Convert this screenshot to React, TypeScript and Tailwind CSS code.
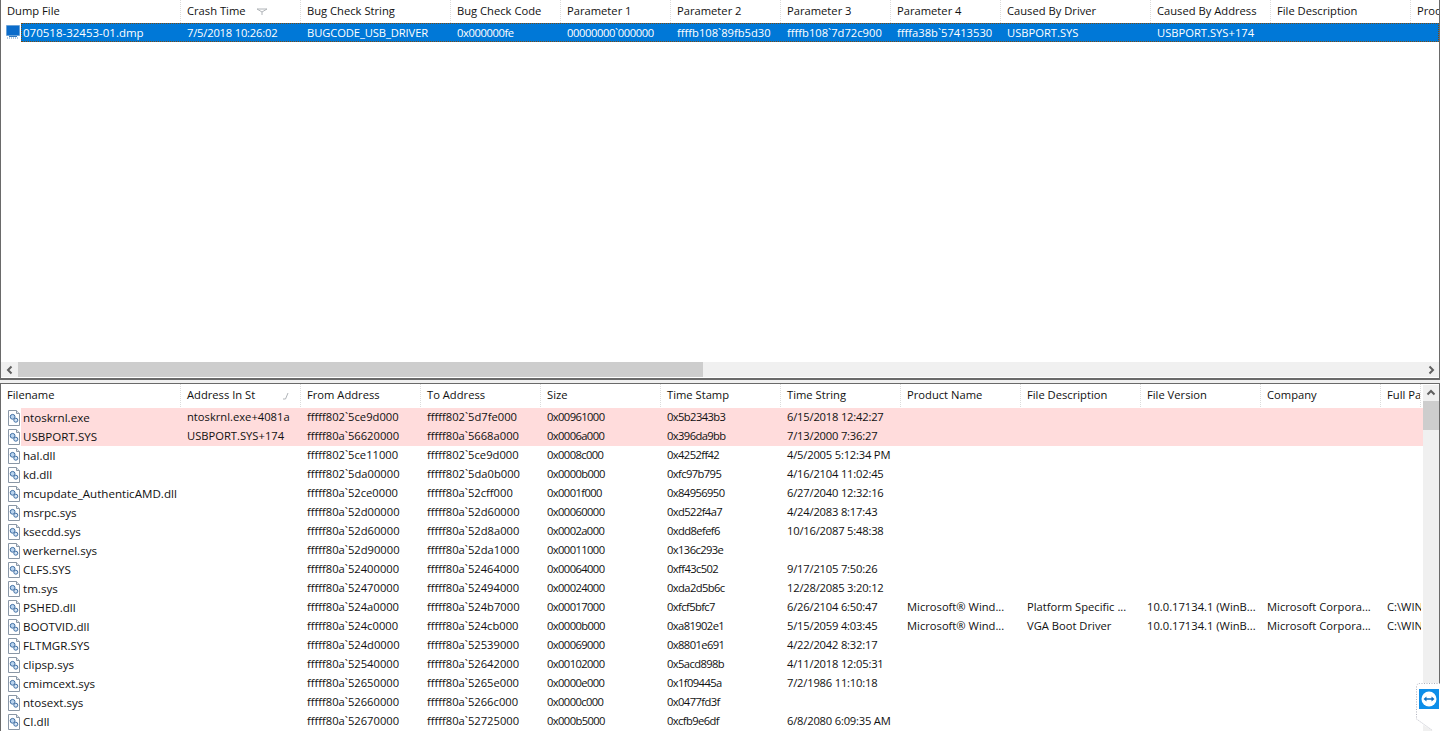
const topCols: [string, number][] = [["Dump File",180],["Crash Time",120],["Bug Check String",150],["Bug Check Code",110],["Parameter 1",110],["Parameter 2",110],["Parameter 3",110],["Parameter 4",110],["Caused By Driver",150],["Caused By Address",120],["File Description",140],["Product Name",120]];
const topRow = ["070518-32453-01.dmp","7/5/2018 10:26:02","BUGCODE_USB_DRIVER","0x000000fe","00000000`000000","ffffb108`89fb5d30","ffffb108`7d72c900","ffffa38b`57413530","USBPORT.SYS","USBPORT.SYS+174","",""];
const topCellClass = ["pl-[2px] text-[11.5px]","pl-[6px] tracking-[-0.2px]","pl-[6px] tracking-[-0.1px]","pl-[6px] tracking-[-0.4px]","pl-[6px] tracking-[-0.4px]","pl-[6px]","pl-[6px]","pl-[6px]","pl-[6px]","pl-[6px]","pl-[6px]","pl-[6px]"];
const botCols: [string, number][] = [["Filename",180],["Address In St",120],["From Address",120],["To Address",120],["Size",120],["Time Stamp",120],["Time String",120],["Product Name",120],["File Description",120],["File Version",120],["Company",120],["Full Path",40]];
const botCellClass = ["pl-[2px] text-[11.6px]","pl-[6px]","pl-[6px]","pl-[6px]","pl-[6px] tracking-[-0.6px]","pl-[6px] tracking-[-0.6px]","pl-[6px] tracking-[-0.2px]","pl-[6px]","pl-[6px]","pl-[6px]","pl-[6px]","pl-[6px]"];
const rows: string[][] = [
["ntoskrnl.exe","ntoskrnl.exe+4081a","fffff802`5ce9d000","fffff802`5d7fe000","0x00961000","0x5b2343b3","6/15/2018 12:42:27"],
["USBPORT.SYS","USBPORT.SYS+174","fffff80a`56620000","fffff80a`5668a000","0x0006a000","0x396da9bb","7/13/2000 7:36:27"],
["hal.dll","","fffff802`5ce11000","fffff802`5ce9d000","0x0008c000","0x4252ff42","4/5/2005 5:12:34 PM"],
["kd.dll","","fffff802`5da00000","fffff802`5da0b000","0x0000b000","0xfc97b795","4/16/2104 11:02:45"],
["mcupdate_AuthenticAMD.dll","","fffff80a`52ce0000","fffff80a`52cff000","0x0001f000","0x84956950","6/27/2040 12:32:16"],
["msrpc.sys","","fffff80a`52d00000","fffff80a`52d60000","0x00060000","0xd522f4a7","4/24/2083 8:17:43"],
["ksecdd.sys","","fffff80a`52d60000","fffff80a`52d8a000","0x0002a000","0xdd8efef6","10/16/2087 5:48:38"],
["werkernel.sys","","fffff80a`52d90000","fffff80a`52da1000","0x00011000","0x136c293e",""],
["CLFS.SYS","","fffff80a`52400000","fffff80a`52464000","0x00064000","0xff43c502","9/17/2105 7:50:26"],
["tm.sys","","fffff80a`52470000","fffff80a`52494000","0x00024000","0xda2d5b6c","12/28/2085 3:20:12"],
["PSHED.dll","","fffff80a`524a0000","fffff80a`524b7000","0x00017000","0xfcf5bfc7","6/26/2104 6:50:47","Microsoft® Wind...","Platform Specific ...","10.0.17134.1 (WinB...","Microsoft Corpora...","C:\\WIN"],
["BOOTVID.dll","","fffff80a`524c0000","fffff80a`524cb000","0x0000b000","0xa81902e1","5/15/2059 4:03:45","Microsoft® Wind...","VGA Boot Driver","10.0.17134.1 (WinB...","Microsoft Corpora...","C:\\WIN"],
["FLTMGR.SYS","","fffff80a`524d0000","fffff80a`52539000","0x00069000","0x8801e691","4/22/2042 8:32:17"],
["clipsp.sys","","fffff80a`52540000","fffff80a`52642000","0x00102000","0x5acd898b","4/11/2018 12:05:31"],
["cmimcext.sys","","fffff80a`52650000","fffff80a`5265e000","0x0000e000","0x1f09445a","7/2/1986 11:10:18"],
["ntosext.sys","","fffff80a`52660000","fffff80a`5266c000","0x0000c000","0x0477fd3f",""],
["CI.dll","","fffff80a`52670000","fffff80a`52725000","0x000b5000","0xcfb9e6df","6/8/2080 6:09:35 AM"],
];
const FONT = "font-['Open_Sans','Noto_Sans',sans-serif] text-[11.2px] text-[#111]";

function DumpIcon() {
  return <svg width="15" height="15" viewBox="0 0 15 15" className="shrink-0"><rect x="0.5" y="0.5" width="13" height="10" fill="#0b6ccb"/><rect x="0.5" y="0.5" width="13" height="10" fill="none" stroke="#4f8fca" strokeDasharray="1 1"/><rect x="3" y="11" width="8" height="1" fill="#2f78c0"/><path d="M1 13h12" stroke="#5d8fc0" strokeDasharray="1 1"/></svg>;
}
function FileIcon() {
  return <svg width="14" height="16" viewBox="0 0 14 16" className="shrink-0"><path d="M1.5.5h8l3 3v12h-11z" fill="#fff" stroke="#8a97a6"/><path d="M9.5.5v3h3" fill="#dfe6ee" stroke="#8a97a6"/><circle cx="5.6" cy="6.8" r="2.4" fill="#b9d3ee" stroke="#3f6ea3"/><circle cx="8.8" cy="10.2" r="2" fill="#d5e4f4" stroke="#3f6ea3"/></svg>;
}
function Header({ cols, sort, tall }: { cols: [string, number][]; sort: "filter" | "arrow"; tall?: boolean }) {
  return (
    <div className={`flex shrink-0 bg-white overflow-hidden ${tall ? "h-[24px] pb-[1px]" : "h-[23px]"}`}>
      {cols.map(([c, w], i) => (
        <div key={c} style={{ width: w }} className="shrink-0 flex items-center pl-[6px] pr-[6px] border-r border-dotted border-[#dcdcdc] overflow-hidden whitespace-nowrap">
          <span>{c}</span>
          {i === 1 && sort === "filter" && <svg width="12" height="8" viewBox="0 0 12 8" className="ml-auto mr-[26px]"><path d="M1 1h10M1 1l5 3v3M6 4l5-3" fill="none" stroke="#b0b4b8"/></svg>}
          {i === 1 && sort === "arrow" && <svg width="7" height="8" viewBox="0 0 7 8" className="ml-auto mr-[5px]"><path d="M1 7h2.5L6 1" fill="none" stroke="#b0b4b8"/></svg>}
        </div>
      ))}
    </div>
  );
}
function Chevron({ d }: { d: string }) {
  return <svg width="10" height="10" viewBox="0 0 10 10"><path d={d} fill="none" stroke="#606060" strokeWidth="2"/></svg>;
}
export default function App() {
  return (
    <div className={`w-[1440px] h-[731px] overflow-hidden bg-white relative flex flex-col ${FONT}`}>
      <div className="h-[380px] shrink-0 flex flex-col border-l border-r border-[#6a6a6a] border-b-2">
        <Header cols={topCols} sort="filter" />
        <div className="flex h-[19px] shrink-0 items-center">
          <div className="w-[20px] pl-[5px] shrink-0"><DumpIcon /></div>
          <div className="flex-1 flex h-full bg-[#0078d7] text-white outline-1 outline-dotted outline-offset-[-1px] outline-[#7a4a10] overflow-hidden whitespace-nowrap">
            {topRow.map((v, i) => (
              <div key={i} style={{ width: i === 0 ? 160 : topCols[i][1] }} className={`shrink-0 flex items-center pt-[1px] ${topCellClass[i]}`}>{v}</div>
            ))}
          </div>
        </div>
        <div className="flex-1" />
        <div className="h-[15px] mb-[1px] shrink-0 flex bg-[#f0f0f0] items-center">
          <div className="w-[17px] flex justify-center"><Chevron d="M6.5 1.5 3 5l3.5 3.5" /></div>
          <div className="w-[685px] h-full bg-[#cdcdcd]" />
          <div className="flex-1" />
          <div className="w-[17px] flex justify-center"><Chevron d="M3.5 1.5 7 5 3.5 8.5" /></div>
        </div>
      </div>
      <div className="h-[3px] shrink-0 bg-[#f0f0f0]" />
      <div className="flex-1 min-h-0 flex border-l border-r border-t border-[#6a6a6a]">
        <div className="flex-1 min-w-0 flex flex-col overflow-hidden">
          <Header cols={botCols} sort="arrow" tall />
          {rows.map((r, ri) => (
            <div key={ri} className="flex h-[19px] shrink-0 items-center whitespace-nowrap">
              <div className="w-[20px] pl-[6px] shrink-0"><FileIcon /></div>
              <div className={`flex-1 flex h-full overflow-hidden ${ri < 2 ? "bg-[#ffdcdc]" : ""}`}>
                {botCols.map(([, w], i) => (
                  <div key={i} style={{ width: i === 0 ? 160 : w }} className={`shrink-0 flex items-center overflow-hidden ${botCellClass[i]}`}>{r[i] ?? ""}</div>
                ))}
              </div>
            </div>
          ))}
        </div>
        <div className="w-[16px] shrink-0 flex flex-col">
          <div className="h-[1px] shrink-0" />
          <div className="flex-1 bg-[#f0f0f0] flex flex-col items-center">
            <div className="h-[16px] flex items-center"><Chevron d="M1.5 6.5 5 3l3.5 3.5" /></div>
            <div className="w-full h-[29px] bg-[#cdcdcd]" />
          </div>
        </div>
      </div>
      <div className="absolute left-[1416px] top-[683px] w-[24px] h-[48px] bg-white [clip-path:polygon(0_0,100%_0,100%_100%,70%_100%,0_78%)] flex items-start pt-[6px] pl-[3px]">
        <div className="w-[20px] h-[20px] bg-[#0e8ee9] flex items-center justify-center shrink-0">
          <svg width="16" height="16" viewBox="0 0 16 16"><circle cx="8" cy="8" r="7.5" fill="#fff"/><path d="M2.5 8 5.5 5.6v1.6h5V5.6L13.5 8l-3 2.4V8.8h-5v1.6z" fill="#0e6fc2"/></svg>
        </div>
      </div>
      <svg width="24" height="48" viewBox="0 0 24 48" className="absolute left-[1416px] top-[683px]"><path d="M24 .5H4Q.5.5.5 4v32l16 11.5" fill="none" stroke="#aeb0bc" strokeDasharray="1 1.5"/></svg>
    </div>
  );
}
